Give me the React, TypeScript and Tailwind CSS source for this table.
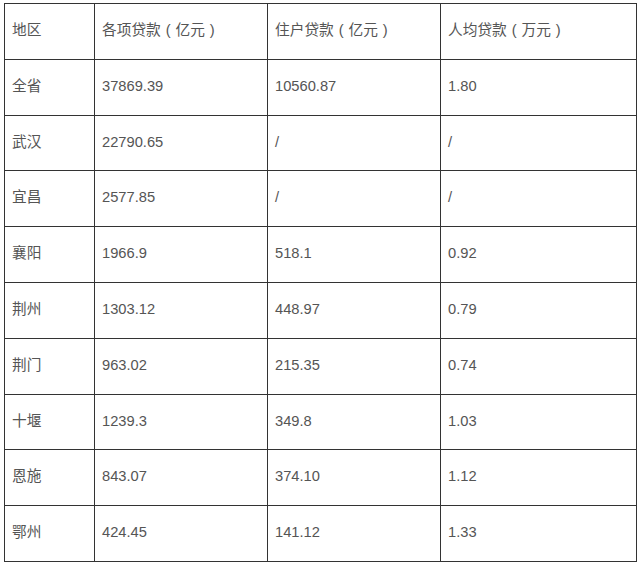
import React from "react";

const rows: string[][] = [
  ["地区", "各项贷款（亿元）", "住户贷款（亿元）", "人均贷款（万元）"],
  ["全省", "37869.39", "10560.87", "1.80"],
  ["武汉", "22790.65", "/", "/"],
  ["宜昌", "2577.85", "/", "/"],
  ["襄阳", "1966.9", "518.1", "0.92"],
  ["荆州", "1303.12", "448.97", "0.79"],
  ["荆门", "963.02", "215.35", "0.74"],
  ["十堰", "1239.3", "349.8", "1.03"],
  ["恩施", "843.07", "374.10", "1.12"],
  ["鄂州", "424.45", "141.12", "1.33"],
];

function Cell({ text }: { text: string }) {
  const parts = text.split(/([（）])/);
  return (
    <>
      {parts.map((p, i) =>
        p === "（" || p === "）" ? (
          <span key={i} className="inline-block w-[1em] text-center">
            {p === "（" ? "(" : ")"}
          </span>
        ) : (
          <React.Fragment key={i}>{p}</React.Fragment>
        )
      )}
    </>
  );
}

export default function App() {
  return (
    <div className="w-[640px] h-[564px] bg-white overflow-hidden pl-[4px] pt-[3px]">
      <table
        className="border-collapse table-fixed text-[14.7px] text-[#555]"
        style={{ fontFamily: '"Liberation Sans", Arial, "Noto Sans CJK SC", sans-serif' }}
      >
        <colgroup>
          <col className="w-[90px]" />
          <col className="w-[173px]" />
          <col className="w-[173px]" />
          <col className="w-[196px]" />
        </colgroup>
        <tbody>
          {rows.map((r, i) => (
            <tr key={i} className="h-[55.8px]">
              {r.map((c, j) => (
                <td
                  key={j}
                  className="border border-[#333] px-[7px] pb-[2px] align-middle whitespace-nowrap leading-none"
                >
                  <Cell text={c} />
                </td>
              ))}
            </tr>
          ))}
        </tbody>
      </table>
    </div>
  );
}
